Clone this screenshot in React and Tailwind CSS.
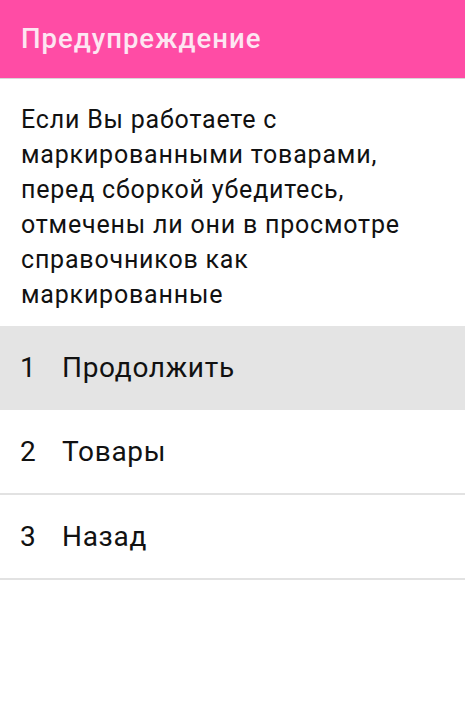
export default function App() {
  const items = [
    { n: "1", label: "Продолжить", active: true },
    { n: "2", label: "Товары" },
    { n: "3", label: "Назад" },
  ];

  return (
    <div className="min-h-screen bg-white" style={{ fontFamily: "Roboto, 'Noto Sans', sans-serif" }}>
      <header className="h-[79px] bg-[#ff4ca5] flex items-center px-[21px] border-b border-[#d8d8d8]">
        <h1 className="text-[27.5px] font-medium text-[#fde6f2] tracking-[1px]">Предупреждение</h1>
      </header>

      <p className="px-[21px] pt-[23px] pb-[14px] text-[25px] leading-[35px] tracking-[0.8px] text-[#111]">
        Если Вы работаете с маркированными товарами, перед сборкой убедитесь, отмечены ли они в просмотре справочников как маркированные
      </p>

      <ul>
        {items.map((it) => (
          <li
            key={it.n}
            className={
              it.active
                ? "h-[84px] flex items-center bg-[#e4e4e4] text-[28px] tracking-[0.7px] text-[#111]"
                : "h-[85px] flex items-center border-b-2 border-[#e2e2e2] text-[28px] tracking-[0.7px] text-[#111]"
            }
          >
            <span className="w-[42px] pl-[20px] box-content">{it.n}</span>
            <span>{it.label}</span>
          </li>
        ))}
      </ul>
    </div>
  );
}
